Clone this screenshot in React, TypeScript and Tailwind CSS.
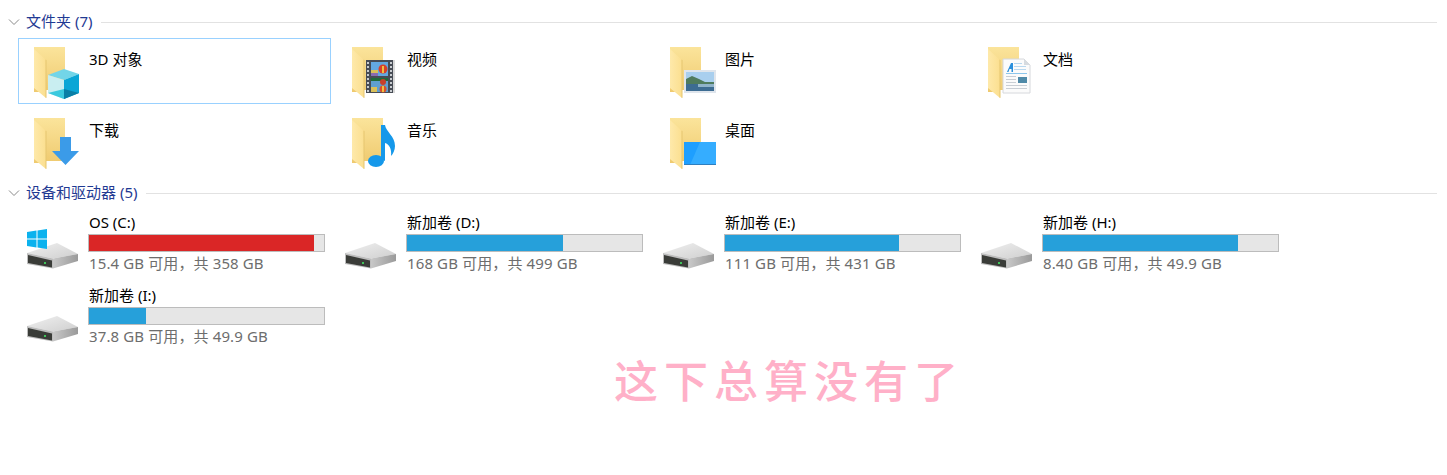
import type { ReactNode } from "react";

const font = "font-['Noto_Sans','Noto_Sans_CJK_SC',sans-serif]";

function FolderIcon({ children }: { children?: ReactNode }) {
  return (
    <svg width="50" height="56" viewBox="0 0 50 56" className="mt-[7px] shrink-0">
      <defs>
        <linearGradient id="folderBack" x1="0" y1="0" x2="0" y2="1">
          <stop offset="0" stopColor="#fbe49b" />
          <stop offset="1" stopColor="#efca6f" />
        </linearGradient>
        <linearGradient id="folderFlap" x1="0" y1="0" x2="1" y2="0">
          <stop offset="0" stopColor="#fee9aa" />
          <stop offset="1" stopColor="#fbdf90" />
        </linearGradient>
      </defs>
      <path d="M0 1h31v43H12v2H0z" fill="url(#folderBack)" />
      <path d="M0 3l12 11v38L0 42z" fill="url(#folderFlap)" />
      <path d="M11.500 13.500v38l1 .5v-38z" fill="#e6c670" />
      {children}
    </svg>
  );
}

function Cube() {
  return (
    <g>
      <path d="M14 29l16-6 15 5-15 6z" fill="#72d5e8" />
      <path d="M14 29l16 5v19l-16-6z" fill="#c9eef1" />
      <path d="M30 34l15-6v19l-15 6z" fill="#0aa6d6" />
      <path d="M14 47l16-4v10z" fill="#3bc9de" />
      <path d="M45 47l-15-4v10z" fill="#0a7fa6" />
    </g>
  );
}

function Film() {
  const holes = [16, 20, 24, 28, 32, 36, 40, 44];
  return (
    <g>
      <rect x="40" y="14" width="3" height="33" fill="#d9d9d9" />
      <rect x="14" y="14" width="27" height="33" fill="#474c55" />
      {holes.map((y) => (
        <g key={y} fill="#c8ccd0">
          <rect x="15" y={y} width="2" height="2" />
          <rect x="38" y={y} width="2" height="2" />
        </g>
      ))}
      <rect x="19" y="16" width="17" height="14" fill="#63a8e0" />
      <rect x="19" y="32" width="17" height="14" fill="#5f9fd0" />
      <rect x="19" y="24" width="7" height="6" fill="#d9c05a" />
      <rect x="19" y="27" width="7" height="3" fill="#8a6bb0" />
      <circle cx="31" cy="23" r="4.500" fill="#d8402a" />
      <rect x="30" y="20" width="2" height="7" fill="#f0c040" />
      <rect x="19" y="32" width="17" height="3" fill="#1f6b3a" />
      <circle cx="31" cy="36" r="3" fill="#c8402a" />
      <circle cx="31" cy="43" r="3.500" fill="#d8502a" />
      <rect x="30" y="40" width="2" height="6" fill="#f0c040" />
      <rect x="19" y="41" width="6" height="5" fill="#d9c05a" />
    </g>
  );
}

function Photo() {
  return (
    <g>
      <rect x="14" y="24" width="32" height="23" fill="#dfe5ec" />
      <rect x="16" y="26" width="28" height="19" fill="#a9cfee" />
      <path d="M16 33l6-3 7 3 6 3h9v3H16z" fill="#4f7b5d" />
      <rect x="16" y="38" width="28" height="7" fill="#3d6c92" />
      <rect x="28" y="38" width="16" height="3" fill="#8fb3c9" />
    </g>
  );
}

function Doc() {
  return (
    <g>
      <path d="M15 13h21l6 6v28H15z" fill="#fbfbfb" stroke="#d6d8dc" />
      <path d="M36 13v6h6z" fill="#d6dbe0" />
      <path d="M19 26l4-9h2v9h-1.500v-3h-2l-1 3z" fill="#2a8fdc" />
      <rect x="26" y="17" width="8" height="1" fill="#b9d8ef" />
      <rect x="26" y="20" width="12" height="1" fill="#b9d8ef" />
      <rect x="26" y="23" width="12" height="1" fill="#b9d8ef" />
      <rect x="18" y="27" width="21" height="1" fill="#8cc6ec" />
      <rect x="30" y="31" width="9" height="6" fill="#4f8aa8" />
      <rect x="18" y="30" width="10" height="1" fill="#c9ced4" />
      <rect x="18" y="33" width="10" height="1" fill="#c9ced4" />
      <rect x="18" y="36" width="10" height="1" fill="#c9ced4" />
      <rect x="18" y="39" width="21" height="1" fill="#c9ced4" />
      <rect x="18" y="42" width="21" height="1" fill="#c9ced4" />
    </g>
  );
}

function DownArrow() {
  return <path d="M26 20h11v14h8L31.500 48 18 34h8z" fill="#3b9be8" />;
}

function Note() {
  return (
    <g fill="#1598ea">
      <ellipse cx="24" cy="44" rx="8" ry="6" />
      <path d="M29 42V8h4c1 7 10 11 10 21 0 4-2 8-4 10 1-7-2-12-6-13v18z" />
    </g>
  );
}

function Desktop() {
  return (
    <g>
      <rect x="14" y="25" width="32" height="23" fill="#1e9fff" />
      <path d="M30 25h16v23H20z" fill="#35adff" />
      <rect x="14" y="47" width="32" height="1" fill="#2f7fbf" />
    </g>
  );
}

function DriveIcon({ system }: { system?: boolean }) {
  return (
    <svg width="54" height="66" viewBox="0 0 54 66" className="shrink-0">
      <defs>
        <linearGradient id="driveTop" x1="0" y1="0" x2="1" y2="1">
          <stop offset="0" stopColor="#f0f0f0" />
          <stop offset="1" stopColor="#cfcfcf" />
        </linearGradient>
        <linearGradient id="driveSide" x1="0" y1="0" x2="1" y2="0">
          <stop offset="0" stopColor="#c8c8c8" />
          <stop offset="1" stopColor="#9a9a9a" />
        </linearGradient>
      </defs>
      <path d="M31 31L1 41 27 46.500 52 42z" fill="url(#driveTop)" />
      <path d="M27 46.500L52 42v7L27 56.500z" fill="url(#driveSide)" />
      <path d="M1 41L27 46.500v10L1 52z" fill="#bdbdbd" />
      <path d="M2 43L26 48.500v7L2 51z" fill="#3a3c38" />
      <rect x="18" y="50" width="2" height="2" fill="#3fc45a" />
      {system && (
        <path
          d="M1 20l9.500-1.400V26.500H1zM11.500 18.500L21 17V26.500H11.500zM1 27.500h9.500V35.400L1 34zM11.500 27.500H21V37l-9.500-1.400z"
          fill="#0bb2ee"
        />
      )}
    </svg>
  );
}

const folders: { name: string; icon?: ReactNode; selected?: boolean }[] = [
  { name: "3D 对象", icon: <Cube />, selected: true },
  { name: "视频", icon: <Film /> },
  { name: "图片", icon: <Photo /> },
  { name: "文档", icon: <Doc /> },
  { name: "下载", icon: <DownArrow /> },
  { name: "音乐", icon: <Note /> },
  { name: "桌面", icon: <Desktop /> },
];

const drives = [
  { name: "OS (C:)", free: 15.4, total: 358, freeLabel: "15.4 GB", totalLabel: "358 GB", system: true, full: true },
  { name: "新加卷 (D:)", free: 168, total: 499, freeLabel: "168 GB", totalLabel: "499 GB" },
  { name: "新加卷 (E:)", free: 111, total: 431, freeLabel: "111 GB", totalLabel: "431 GB" },
  { name: "新加卷 (H:)", free: 8.4, total: 49.9, freeLabel: "8.40 GB", totalLabel: "49.9 GB" },
  { name: "新加卷 (I:)", free: 37.8, total: 49.9, freeLabel: "37.8 GB", totalLabel: "49.9 GB" },
];

function SectionHeader({ title }: { title: string }) {
  return (
    <div className="flex h-5 items-center pr-[10px]">
      <svg width="12" height="12" viewBox="0 0 12 12" className="ml-[8px] shrink-0">
        <path d="M1 3.500l5 5 5-5" fill="none" stroke="#8a8a8a" strokeWidth="1" />
      </svg>
      <span className="ml-[6px] -translate-y-px text-[15px] leading-5 text-[#1f3a93]">{title}</span>
      <div className="ml-[9px] h-px flex-1 bg-[#e2e2e2]" />
    </div>
  );
}

export default function App() {
  return (
    <div className={`h-[475px] w-[1447px] overflow-hidden bg-white pt-3 text-[15px] text-black ${font}`}>
      <SectionHeader title="文件夹 (7)" />
      <div className="mt-[6px] grid grid-cols-[repeat(4,318px)] gap-y-[5px] pl-[18px]">
        {folders.map((f) => (
          <div
            key={f.name}
            className={`flex h-[66px] w-[313px] items-start border pl-[15px] ${
              f.selected ? "border-[#99d1ff]" : "border-transparent"
            }`}
          >
            <FolderIcon>{f.icon}</FolderIcon>
            <span className="ml-[5px] mt-[10px] leading-5">{f.name}</span>
          </div>
        ))}
      </div>
      <div className="mt-2">
        <SectionHeader title="设备和驱动器 (5)" />
      </div>
      <div className="mt-[9px] grid grid-cols-[repeat(4,318px)] auto-rows-[73px] pl-[18px]">
        {drives.map((d) => (
          <div key={d.name} className="flex items-start pl-2">
            <DriveIcon system={d.system} />
            <div className="ml-2 w-[237px]">
              <div className="pl-px leading-5">{d.name}</div>
              <div className="mt-[2px] h-[18px] border border-[#bcbcbc] bg-[#e6e6e6]">
                <div
                  className={`h-full ${d.full ? "bg-[#da2626]" : "bg-[#26a0da]"}`}
                  style={{ width: `${(1 - d.free / d.total) * 100}%` }}
                />
              </div>
              <div className="mt-px pl-px leading-5 tracking-[0.12px] text-[#6d6d6d]">
                {d.freeLabel} 可用，共 {d.totalLabel}
              </div>
            </div>
          </div>
        ))}
      </div>
      <div className="-mt-[2px] pl-[614px] text-[44px] font-medium leading-[50px] tracking-[6px] text-[#ffb0c8]">
        这下总算没有了
      </div>
    </div>
  );
}
